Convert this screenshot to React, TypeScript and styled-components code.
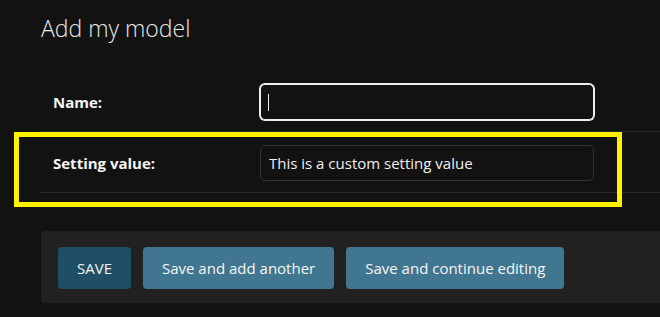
import styled, { createGlobalStyle } from "styled-components";

const GlobalStyle = createGlobalStyle`
  html, body {
    margin: 0;
    padding: 0;
    background-color: #121212;
    overflow: hidden;
  }
  body {
    font-family: "Open Sans", "Noto Sans", sans-serif;
    color: #f5f5f5;
  }
`;

const Page = styled.div`
  width: 720px;
  padding: 13px 0 0 41px;
`;

const Title = styled.h1`
  margin: 0 0 28px;
  font-size: 23px;
  font-weight: 300;
  line-height: 30px;
  color: #e8e8e8;
`;

const Fieldset = styled.div`
  display: flex;
  flex-direction: column;
`;

const FormRow = styled.div`
  position: relative;
  display: flex;
  align-items: center;
  padding: 13px 0 11px 12px;
  border-bottom: 1px solid #2a2a2a;
`;

const Label = styled.label`
  width: 207px;
  font-size: 15px;
  font-weight: 700;
  line-height: 20px;
  color: #f5f5f5;
`;

const InputWrap = styled.div`
  position: relative;
  display: flex;
`;

const TextInput = styled.input<{ $focused?: boolean }>`
  box-sizing: border-box;
  width: 334px;
  height: 36px;
  padding: 0 8px;
  border: 1px solid ${(p) => (p.$focused ? "#eeeeee" : "#333333")};
  border-radius: 5px;
  box-shadow: ${(p) => (p.$focused ? "0 0 0 1px #eeeeee" : "none")};
  background-color: #121212;
  color: #f0f0f0;
  font-family: "Open Sans", "Noto Sans", sans-serif;
  font-size: 15px;
  outline: none;
`;

const Caret = styled.span`
  position: absolute;
  left: 8px;
  top: 10px;
  width: 1px;
  height: 17px;
  background-color: #f0f0f0;
`;

const Highlight = styled.div`
  position: absolute;
  left: -27px;
  top: 0;
  width: 608px;
  height: 75px;
  box-sizing: border-box;
  border: 5px solid #fff200;
  pointer-events: none;
`;

const SubmitRow = styled.div`
  display: flex;
  gap: 12px;
  margin-top: 38px;
  padding: 16px 17px 14px;
  border-radius: 4px;
  background-color: #212121;
`;

const Button = styled.button<{ $primary?: boolean }>`
  height: 42px;
  padding: 0 19px;
  border: none;
  border-radius: 4px;
  background-color: ${(p) => (p.$primary ? "#1f4f64" : "#417690")};
  color: #f5f5f5;
  font-family: "Open Sans", "Noto Sans", sans-serif;
  font-size: 15px;
  cursor: pointer;
`;

export default function App() {
  return (
    <>
      <GlobalStyle />
      <Page>
        <Title>Add my model</Title>
        <Fieldset>
          <FormRow>
            <Label>Name:</Label>
            <InputWrap>
              <TextInput $focused type="text" defaultValue="" />
              <Caret />
            </InputWrap>
          </FormRow>
          <FormRow>
            <Label>Setting value:</Label>
            <InputWrap>
              <TextInput type="text" defaultValue="This is a custom setting value" />
            </InputWrap>
            <Highlight />
          </FormRow>
        </Fieldset>
        <SubmitRow>
          <Button $primary>SAVE</Button>
          <Button>Save and add another</Button>
          <Button>Save and continue editing</Button>
        </SubmitRow>
      </Page>
    </>
  );
}
